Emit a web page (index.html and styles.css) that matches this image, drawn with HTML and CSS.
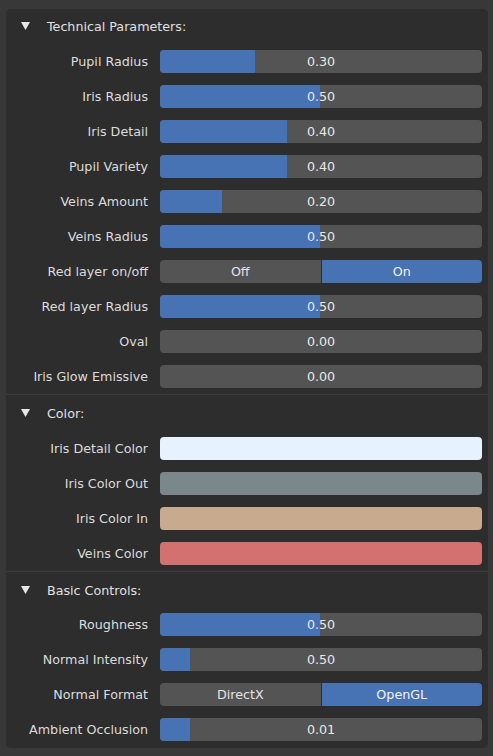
FILE: index.html
```html
<!DOCTYPE html>
<html>
<head>
<meta charset="utf-8">
<link rel="stylesheet" href="styles.css">
</head>
<body>
<div class="panel">
  <section class="section first">
    <div class="header">
      <svg class="tri" width="9" height="8" viewBox="0 0 9 8"><polygon points="0,0 9,0 4.5,8" fill="#e6e6e6"/></svg>
      <span>Technical Parameters:</span>
    </div>
    <div class="row"><span class="label">Pupil Radius</span><div class="slider"><div class="fill" style="width:29.5%"></div><span class="val">0.30</span></div></div>
    <div class="row"><span class="label">Iris Radius</span><div class="slider"><div class="fill" style="width:49.7%"></div><span class="val">0.50</span></div></div>
    <div class="row"><span class="label">Iris Detail</span><div class="slider"><div class="fill" style="width:39.5%"></div><span class="val">0.40</span></div></div>
    <div class="row"><span class="label">Pupil Variety</span><div class="slider"><div class="fill" style="width:39.5%"></div><span class="val">0.40</span></div></div>
    <div class="row"><span class="label">Veins Amount</span><div class="slider"><div class="fill" style="width:19.3%"></div><span class="val">0.20</span></div></div>
    <div class="row"><span class="label">Veins Radius</span><div class="slider"><div class="fill" style="width:49.7%"></div><span class="val">0.50</span></div></div>
    <div class="row"><span class="label">Red layer on/off</span><div class="toggle"><span class="opt">Off</span><span class="opt on">On</span></div></div>
    <div class="row"><span class="label">Red layer Radius</span><div class="slider"><div class="fill" style="width:49.7%"></div><span class="val">0.50</span></div></div>
    <div class="row"><span class="label">Oval</span><div class="slider"><div class="fill" style="width:0%"></div><span class="val">0.00</span></div></div>
    <div class="row"><span class="label">Iris Glow Emissive</span><div class="slider"><div class="fill" style="width:0%"></div><span class="val">0.00</span></div></div>
  </section>
  <section class="section">
    <div class="header">
      <svg class="tri" width="9" height="8" viewBox="0 0 9 8"><polygon points="0,0 9,0 4.5,8" fill="#e6e6e6"/></svg>
      <span>Color:</span>
    </div>
    <div class="row"><span class="label">Iris Detail Color</span><div class="swatch c1"></div></div>
    <div class="row"><span class="label">Iris Color Out</span><div class="swatch c2"></div></div>
    <div class="row"><span class="label">Iris Color In</span><div class="swatch c3"></div></div>
    <div class="row"><span class="label">Veins Color</span><div class="swatch c4"></div></div>
  </section>
  <section class="section last">
    <div class="header">
      <svg class="tri" width="9" height="8" viewBox="0 0 9 8"><polygon points="0,0 9,0 4.5,8" fill="#e6e6e6"/></svg>
      <span>Basic Controls:</span>
    </div>
    <div class="row"><span class="label">Roughness</span><div class="slider"><div class="fill" style="width:49.7%"></div><span class="val">0.50</span></div></div>
    <div class="row"><span class="label">Normal Intensity</span><div class="slider"><div class="fill" style="width:9.3%"></div><span class="val">0.50</span></div></div>
    <div class="row"><span class="label">Normal Format</span><div class="toggle"><span class="opt">DirectX</span><span class="opt on">OpenGL</span></div></div>
    <div class="row"><span class="label">Ambient Occlusion</span><div class="slider"><div class="fill" style="width:9.3%"></div><span class="val">0.01</span></div></div>
  </section>
</div>
</body>
</html>
```
FILE: styles.css
```css
html, body {
  margin: 0;
  padding: 0;
  background: #383838;
  width: 493px;
  height: 756px;
  overflow: hidden;
}
body {
  font-family: "DejaVu Sans", sans-serif;
  font-size: 12.7px;
  color: #dedede;
}
.panel {
  margin: 9px 0 0 6px;
  width: 482px;
  height: 739px;
  background: #2d2d2d;
  border-radius: 5px;
  box-sizing: border-box;
  display: flex;
  flex-direction: column;
}
.section {
  display: flex;
  flex-direction: column;
  gap: 12px;
  padding: 6px 6px 6px 0;
  border-bottom: 1px solid #3b3b3b;
}
.section.first {
  padding-top: 5px;
}
.section.last {
  border-bottom: none;
  gap: 11px;
}
.section.last .row + .row {
  margin-top: 1px;
}
.header {
  height: 24px;
  display: flex;
  align-items: center;
  padding-left: 15px;
  gap: 17px;
  color: #e0e0e0;
}
.tri {
  display: block;
}
.row {
  display: grid;
  grid-template-columns: 142px 1fr;
  column-gap: 12px;
  height: 23px;
  align-items: center;
}
.label {
  text-align: right;
  white-space: nowrap;
  color: #dcdcdc;
}
.slider {
  height: 23px;
  background: #545454;
  border-radius: 4px;
  overflow: hidden;
  display: grid;
}
.fill {
  grid-area: 1 / 1;
  background: #4772b3;
  height: 100%;
  justify-self: start;
}
.val {
  grid-area: 1 / 1;
  justify-self: center;
  align-self: center;
  color: #e8e8e8;
}
.toggle {
  height: 23px;
  display: grid;
  grid-template-columns: 1fr 1fr;
  gap: 1px;
  border-radius: 4px;
  overflow: hidden;
  background: #2d2d2d;
}
.opt {
  background: #545454;
  display: flex;
  align-items: center;
  justify-content: center;
  color: #e4e4e4;
}
.opt.on {
  background: #4772b3;
  color: #f2f2f2;
}
.swatch {
  height: 23px;
  border-radius: 4px;
}
.c1 { background: #e6f3ff; }
.c2 { background: #7a878b; }
.c3 { background: #c8aa8e; }
.c4 { background: #d37070; }
```
